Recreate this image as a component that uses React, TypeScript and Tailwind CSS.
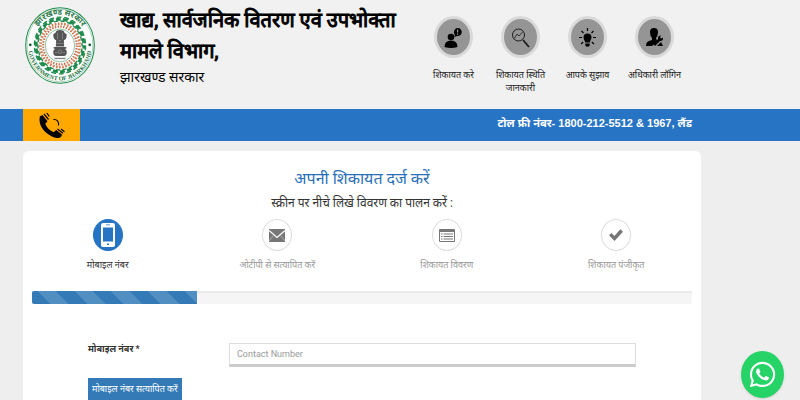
import { useState } from "react";
import type { ReactNode } from "react";
import { FaWhatsapp } from "react-icons/fa";
import clsx from "clsx";

const green = "#1f8a4c";

function Emblem() {
    return (
        <svg viewBox="0 0 200 220" preserveAspectRatio="none" className="h-[77px] w-[70px] shrink-0" role="img" aria-label="Government of Jharkhand">
            <defs>
                <path id="emblem-top" d="M 20 110 A 80 88 0 0 1 180 110" />
                <path id="emblem-bottom" d="M 9 110 A 91 100 0 0 0 191 110" />
            </defs>
            <ellipse cx="100" cy="110" rx="98" ry="108" fill="#fff" stroke={green} strokeWidth="3" />
            <ellipse cx="100" cy="110" rx="94" ry="104" fill="none" stroke={green} strokeWidth="1" />
            <ellipse cx="100" cy="110" rx="73" ry="81" fill="none" stroke={green} strokeWidth="4" strokeDasharray="14 8" />
            <ellipse cx="100" cy="110" rx="68" ry="75" fill="none" stroke={green} strokeWidth="8" strokeDasharray="14 6.500" strokeDashoffset="5" />
            <ellipse cx="100" cy="110" rx="63" ry="70" fill="none" stroke={green} strokeWidth="4" strokeDasharray="12 7" strokeDashoffset="10" />
            <ellipse cx="100" cy="110" rx="56" ry="62" fill="none" stroke="#d17f58" strokeWidth="8" strokeDasharray="5 4" />
            <ellipse cx="100" cy="110" rx="48" ry="54" fill="none" stroke="#c96a45" strokeWidth="6" strokeDasharray="4 4" />
            <ellipse cx="100" cy="110" rx="42" ry="47" fill="#fff" stroke={green} strokeWidth="1.500" />
            <g fill="#555">
                <path d="M87 74q2-8 13-8t13 8l6 3q1 9-3 15l-5 3 1 18H88l1-18-5-3q-4-6-3-15z" />
                <path d="M82 114h36v5h-4l5 6q2 13-7 15H88q-9-2-7-15l5-6h-4z" />
                <path d="M84 145h32v4H84z" opacity=".7" />
            </g>
            <g fill="none" stroke="#aaa" strokeWidth="1.500">
                <path d="M93 74v18M107 74v18M97 96h6M89 104h22" />
                <circle cx="100" cy="128" r="5" />
                <path d="M86 130h7M107 130h7" />
            </g>
            <circle cx="15" cy="108" r="4" fill="#145c33" />
            <circle cx="185" cy="108" r="4" fill="#145c33" />
            <text fontSize="23" fontWeight="700" fill="#2c7a4b" textAnchor="middle">
                <textPath href="#emblem-top" startOffset="50%">झारखण्ड सरकार</textPath>
            </text>
            <text fontSize="17" fontWeight="700" fill="#17713c" textAnchor="middle" fontFamily="Liberation Serif, serif">
                <textPath href="#emblem-bottom" startOffset="50%">GOVERNMENT OF JHARKHAND</textPath>
            </text>
        </svg>
    );
}

function PhoneIcon() {
    return (
        <svg viewBox="-1 -1 28 28" className="h-7 w-7" aria-hidden="true">
            <path d="M.8 4.500 3.500 3l5 6.300-2.200 2.400c1.500 4 4.500 7 8.400 8.500l2.600-2.200 5.700 4.500-1 2.500c-2 1.300-5 1.300-8 0C7.500 22 2 16.500.8 10.500c-.4-2-.4-4 0-6z" />
            <path d="m5 2 4.500 5.500M7.800 1l2.500 3.500M18.500 17l5.500 4.200M22 17l3.500 2.700" stroke="#000" strokeWidth="1.200" />
            <path d="M14.500 7.500c3.500-.5 5.500 2 5 6" fill="none" stroke="#000" strokeWidth="1.100" />
        </svg>
    );
}

const menu: { label: string; icon: ReactNode }[] = [
    {
        label: "शिकायत करे",
        icon: (
            <>
                <circle cx="7" cy="10" r="3.3" />
                <path d="M.5 20q0-6.500 6.500-6.500T13.500 20q-6 2-13 0z" />
                <path d="M13.500 1a4 4 0 1 1-.6 7.900L10.500 10l.3-2.500A4 4 0 0 1 13.500 1z" />
                <path d="M13.600 2.500v3M13.600 6.500v1.200" stroke="#999" strokeWidth="1.200" />
            </>
        ),
    },
    {
        label: "शिकायत स्थिति जानकारी",
        icon: (
            <g fill="none" stroke="#1a1a1a">
                <circle cx="7.500" cy="8" r="6" strokeWidth="1" />
                <path d="m3.500 11 2.500-4 2 2 3.500-4" strokeWidth=".8" />
                <path d="m12 13 6 7" strokeWidth="1.800" />
            </g>
        ),
    },
    {
        label: "आपके सुझाव",
        icon: (
            <>
                <path d="M9.500 6.500a4 4 0 0 1 4 4c0 2-1.500 3-1.700 5H7.200c-.2-2-1.700-3-1.700-5a4 4 0 0 1 4-4zM7.300 16.500h4.400v2l-1.400 1.300H8.700l-1.400-1.300z" />
                <path d="M9.500 1v3M3.500 4l2 2M15.500 4l-2 2M1 10.500h3M15 10.500h3M3 17l2.200-2M16 17l-2.200-2" stroke="#000" strokeWidth="1.200" />
            </>
        ),
    },
    {
        label: "अधिकारी लॉगिन",
        icon: (
            <>
                <path d="M5 5q0-4 4-4t4 4q0 4-2 6l1 3-5 5H1q0-4 3-5l3-1v-2Q5 9 5 5z" />
                <path d="m8 17 5-5q-.5-3.500 3-3.500l-1 2 1.500 1 1.500-1q.5 3.500-3 3.500L10 19z" />
                <path d="m16 15 2 4h-6z" />
            </>
        ),
    },
];

const steps: { label: string; icon: ReactNode }[] = [
    {
        label: "मोबाइल नंबर",
        icon: (
            <svg viewBox="0 0 14 24" className="h-6 w-3.5" aria-hidden="true">
                <path fillRule="evenodd" fill="#fff" d="M2 0h10q2 0 2 2v20q0 2-2 2H2q-2 0-2-2V2q0-2 2-2zm0 4.500v14h10v-14zm4 16V22h2v-1.500zM5 1.500v.8h4v-.8z" />
            </svg>
        ),
    },
    {
        label: "ओटीपी से सत्यापित करें",
        icon: (
            <svg viewBox="0 0 16 13" className="h-[13px] w-4" aria-hidden="true">
                <path fill="#777" d="M0 0h16v13H0z" />
                <path d="m0 1.500 8 7 8-7" fill="none" stroke="#fff" strokeWidth="1.200" />
                <path d="m0 12 4.500-5.500M16 12l-4.500-5.500" fill="none" stroke="#fff" strokeWidth=".4" />
            </svg>
        ),
    },
    {
        label: "शिकायत विवरण",
        icon: (
            <svg viewBox="0 0 16 13" className="h-[13px] w-4" aria-hidden="true">
                <path fillRule="evenodd" fill="#777" d="M1 0h14q1 0 1 1v11q0 1-1 1H1q-1 0-1-1V1q0-1 1-1zm0 3v9h14V3z" />
                <path d="M2 5h1.500M4.500 5H14M2 7.500h1.500M4.500 7.500H14M2 10h1.500M4.500 10H14" stroke="#777" strokeWidth="1.200" />
            </svg>
        ),
    },
    {
        label: "शिकायत पंजीकृत",
        icon: (
            <svg viewBox="0 0 14 12" className="h-3 w-3.5" fill="#777" aria-hidden="true">
                <path d="M0 6.300 2.500 4 5.400 6.900 11.300.3 14 2.800 5.500 12z" />
            </svg>
        ),
    },
];

export default function App() {
    const [contact, setContact] = useState("");
    const active = 0;

    return (
        <div className="min-h-screen bg-[#eeeeee] font-['Roboto','Noto_Sans','Noto_Sans_Devanagari',sans-serif] text-[#333]">
            <header className="flex h-[109px] items-start bg-[#f1f1f1]">
                <div className="pt-[7px] pl-[25px]">
                    <Emblem />
                </div>
                <div className="flex-1 pt-[5px] pl-[25px] text-black">
                    <h1 className="w-[290px] text-xl leading-[31px] font-normal [-webkit-text-stroke:1px_black]">खाद्य, सार्वजनिक वितरण एवं उपभोक्ता मामले विभाग,</h1>
                    <p className="text-sm leading-5">झारखण्ड सरकार</p>
                </div>
                <nav className="mr-28 grid w-[268px] grid-cols-4 pt-4">
                    {menu.map((item) => (
                        <a key={item.label} href="#" className="flex flex-col items-center text-center text-[9px] leading-[13px] text-[#222]">
                            <span className="mb-[11px] flex h-[42px] w-[39px] items-center justify-center rounded-[50%] border-3 border-[#d9d9d9] bg-[#959595]">
                                <svg viewBox="0 0 19 21" className="h-[21px] w-[19px]" aria-hidden="true">
                                    {item.icon}
                                </svg>
                            </span>
                            <span className="px-1">{item.label}</span>
                        </a>
                    ))}
                </nav>
            </header>

            <div className="flex h-8 items-center bg-[#2774c4]">
                <div className="ml-[23px] flex h-full w-[57px] items-center justify-center bg-[#ffa800]">
                    <PhoneIcon />
                </div>
                <p className="mr-[108px] ml-auto pb-1 font-['Liberation_Sans','Noto_Sans','Noto_Sans_Devanagari',sans-serif] text-[11px] font-bold text-white">
                    टोल फ्री नंबर- 1800-212-5512 &amp; 1967, लैंड
                </p>
            </div>

            <main className="mt-2.5 mr-[99px] ml-[23px] rounded-t-md bg-white pt-4">
                <h2 className="text-center text-base leading-6 text-[#2a70b8]">अपनी शिकायत दर्ज करें</h2>
                <p className="text-center text-xs leading-6">स्क्रीन पर नीचे लिखे विवरण का पालन करें :</p>

                <ol className="mt-1 grid grid-cols-4">
                    {steps.map((step, i) => (
                        <li key={step.label} className="flex flex-col items-center gap-1.5">
                            <span
                                className={clsx(
                                    "flex h-8 w-[30px] items-center justify-center rounded-[50%] border",
                                    i === active ? "border-[#2774c4] bg-[#2774c4]" : "border-[#ddd] bg-white"
                                )}
                            >
                                {step.icon}
                            </span>
                            <span className={clsx("text-[9px] leading-4", i === active ? "text-[#333]" : "text-[#999]")}>{step.label}</span>
                        </li>
                    ))}
                </ol>

                <div className="mx-[9px] mt-[18px] h-[13px] overflow-hidden rounded-xs bg-[#f5f5f5] shadow-[inset_0_2px_0_#e9e9e9]">
                    <div className="h-full w-1/4 bg-[#337ab7] bg-[repeating-linear-gradient(45deg,transparent_0_13px,rgba(255,255,255,.15)_13px_26px)]" />
                </div>

                <form className="px-[65px] pt-[39px]" onSubmit={(e) => e.preventDefault()}>
                    <div className="flex">
                        <label htmlFor="contact" className="w-[141px] text-[9px] leading-3 font-bold">
                            मोबाइल नंबर *
                        </label>
                        <input
                            id="contact"
                            type="tel"
                            placeholder="Contact Number"
                            value={contact}
                            onChange={(e) => setContact(e.target.value)}
                            className="h-6 min-w-0 flex-1 border border-b-3 border-[#ddd] border-b-[#ccc] px-[7px] text-[9px] outline-none placeholder:text-[#999]"
                        />
                    </div>
                    <button type="submit" className="mt-[11px] block h-[22px] bg-[#337ab7] px-1 text-[9px] leading-4 text-white">
                        मोबाइल नंबर सत्यापित करें
                    </button>
                </form>
            </main>

            <a href="#" aria-label="WhatsApp" className="fixed right-4 bottom-0.5 flex h-[47px] w-[43px] items-center justify-center rounded-[50%] bg-[#25d366] text-white shadow">
                <FaWhatsapp className="size-[29px]" />
            </a>
        </div>
    );
}
